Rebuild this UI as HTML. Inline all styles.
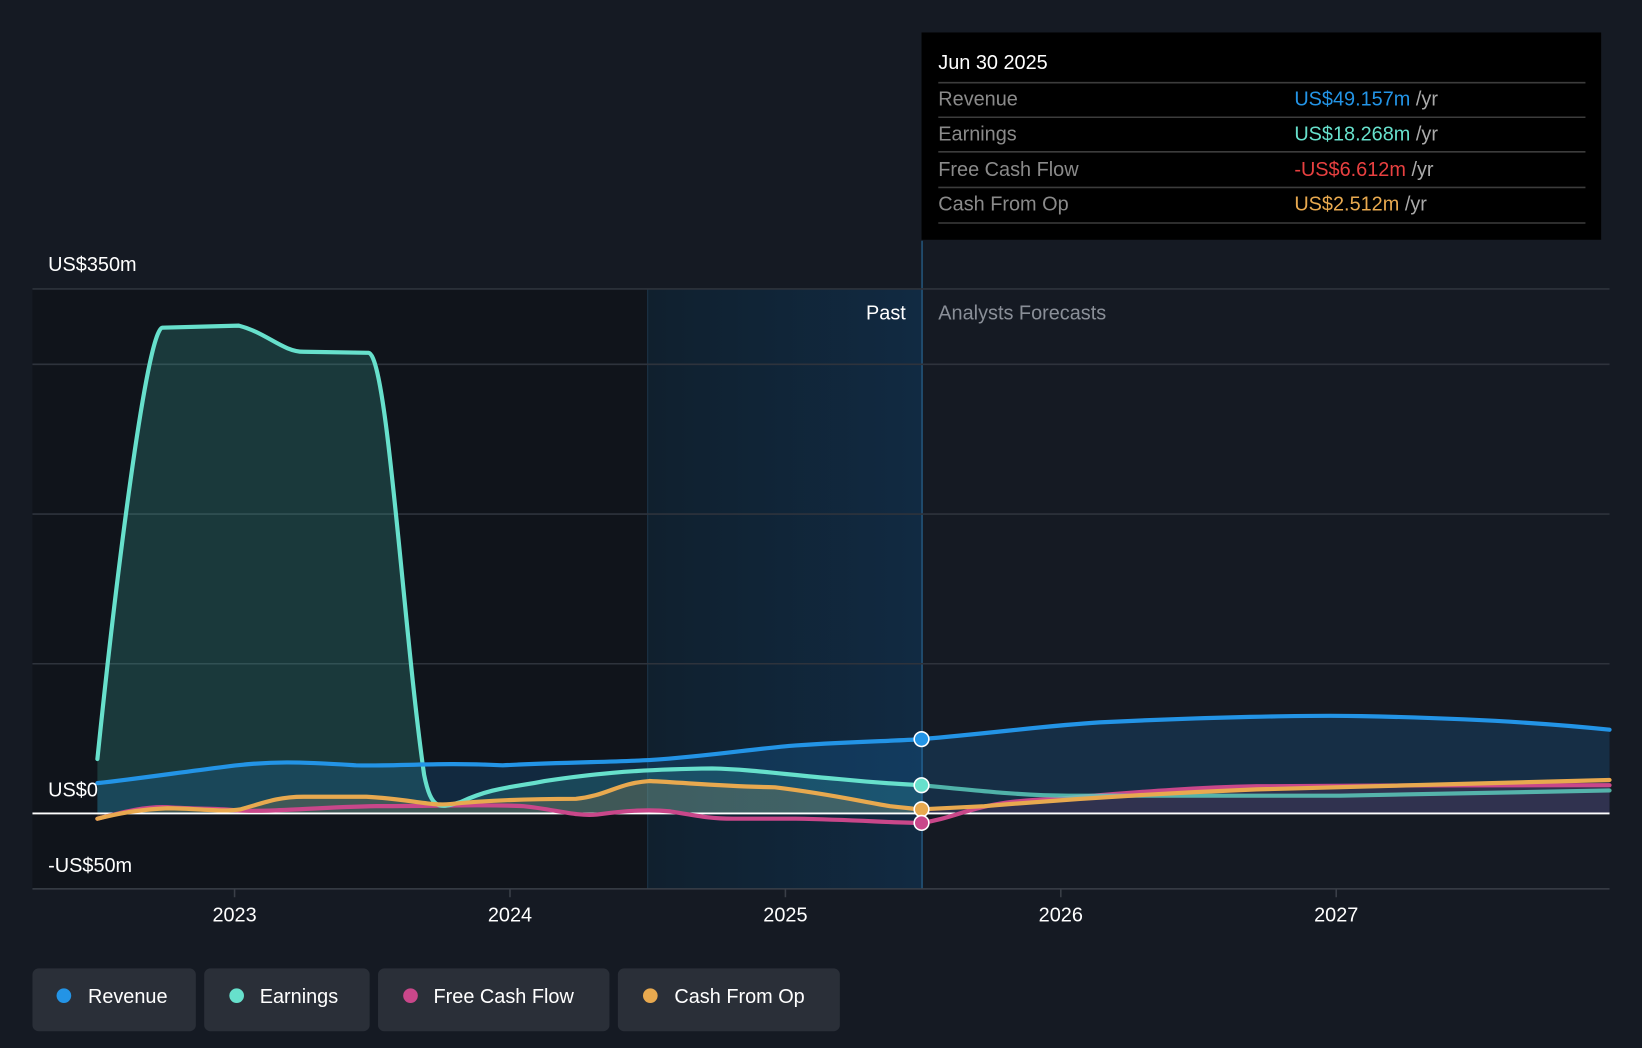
<!DOCTYPE html>
<html><head><meta charset="utf-8"><style>
html,body{margin:0;padding:0;background:#151a23;overflow:hidden}
svg{display:block}
text{font-family:"Liberation Sans",sans-serif}
</style></head><body>
<svg width="1642" height="1048" viewBox="0 0 1568 1001" preserveAspectRatio="none" xmlns="http://www.w3.org/2000/svg">
<defs>
<linearGradient id="hl" x1="0" x2="1" y1="0" y2="0">
<stop offset="0" stop-color="#10202e"/><stop offset="1" stop-color="#112a42"/>
</linearGradient>
</defs>
<rect width="1568" height="1001" fill="#151a23"/>
<rect x="31" y="276" width="587" height="573" fill="#10141b"/>
<rect x="618" y="276" width="262" height="573" fill="url(#hl)"/>
<line x1="618.5" y1="276" x2="618.5" y2="849" stroke="#1d3346" stroke-width="1"/>
<line x1="880.5" y1="230" x2="880.5" y2="849" stroke="#23557a" stroke-width="1.5"/>
<g stroke="#2e333c" stroke-width="1.5">
<line x1="31" y1="276" x2="1537" y2="276"/>
<line x1="31" y1="348" x2="1537" y2="348"/>
<line x1="31" y1="491" x2="1537" y2="491"/>
<line x1="31" y1="634" x2="1537" y2="634"/>
<line x1="31" y1="849" x2="1537" y2="849" stroke="#3a3f48"/>
</g>
<g stroke="#3a3f48" stroke-width="1.5">
<line x1="224" y1="849" x2="224" y2="857"/><line x1="487" y1="849" x2="487" y2="857"/>
<line x1="750" y1="849" x2="750" y2="857"/><line x1="1013" y1="849" x2="1013" y2="857"/>
<line x1="1276" y1="849" x2="1276" y2="857"/>
</g>
<!-- fills -->
<path d="M93,725 C110,560 140,315 155,313 L228,311 C255,318 270,336 290,336 L352,337 C370,340 385,600 405,740 C412,775 420,772 440,766 C470,752 490,752 520,746 C560,740 600,735 680,734 C720,735 750,740 800,744 C840,748 860,749 880,750 L880,777 L93,777 Z" fill="#3fbfae" fill-opacity="0.22"/>
<path d="M93,748 C130,744 170,738 210,733 C260,726 290,728 340,731 C380,732 420,728 480,731 C540,728 580,728 620,726 C680,722 720,715 760,712 C820,708 850,708 880,706 C950,700 1000,693 1050,690 C1150,685 1250,683 1300,684 C1400,686 1480,691 1537,697 L1537,777 L93,777 Z" fill="#1e88e5" fill-opacity="0.18"/>
<path d="M93,782 C120,775 140,773 160,772 C190,772 210,776 230,773 C260,764 270,761 290,761 L350,761 C390,763 410,770 430,768 C470,764 510,763 550,763 C580,760 590,748 620,746 C660,748 690,751 740,752 C790,758 820,765 850,770 C870,772 875,773 880,773 L880,777 L93,777 Z" fill="#e8a94f" fill-opacity="0.18"/>
<path d="M880,773 L940,770 C1000,765 1100,758 1200,754 C1350,751 1450,748 1537,745 L1537,777 L880,777Z" fill="#c9478a" fill-opacity="0.15"/>
<line x1="31" y1="777" x2="1537" y2="777" stroke="#ffffff" stroke-width="1.8"/>
<!-- lines -->
<g fill="none" stroke-width="4" stroke-linecap="round">
<path d="M93,782 C120,775 140,770 160,771 C190,773 210,772 225,774 C260,776 300,771 360,770 C420,770 460,768 500,770 C530,773 550,780 570,778 C600,774 620,773 640,775 C670,780 680,782 700,782 L760,782 C820,783 850,786 880,786 C920,780 930,765 1010,763 C1100,755 1150,752 1200,751 C1300,750 1450,750 1537,750" stroke="#c9478a"/>
<path d="M880,750 C940,756 980,760 1020,760 L1280,760 L1537,755" stroke="#5fd3c2" stroke-opacity="0.8"/>
<path d="M93,725 C110,560 140,315 155,313 L228,311 C255,318 270,336 290,336 L352,337 C370,340 385,600 405,740 C412,775 420,772 440,766 C470,752 490,752 520,746 C560,740 600,735 680,734 C720,735 750,740 800,744 C840,748 860,749 880,750" stroke="#67e0cc"/>
<path d="M93,782 C120,775 140,773 160,772 C190,772 210,776 230,773 C260,764 270,761 290,761 L350,761 C390,763 410,770 430,768 C470,764 510,763 550,763 C580,760 590,748 620,746 C660,748 690,751 740,752 C790,758 820,765 850,770 C870,772 875,773 880,773 L940,770 C1000,765 1100,758 1200,754 C1350,751 1450,748 1537,745" stroke="#e8a94f"/>
<path d="M93,748 C130,744 170,738 210,733 C260,726 290,728 340,731 C380,732 420,728 480,731 C540,728 580,728 620,726 C680,722 720,715 760,712 C820,708 850,708 880,706 C950,700 1000,693 1050,690 C1150,685 1250,683 1300,684 C1400,686 1480,691 1537,697" stroke="#2394e6"/>
</g>
<g stroke="#fff" stroke-width="1.5">
<circle cx="880" cy="706" r="7" fill="#2394e6"/>
<circle cx="880" cy="750" r="7" fill="#67e0cc"/>
<circle cx="880" cy="773" r="7" fill="#e8a94f"/>
<circle cx="880" cy="786" r="7" fill="#c9478a"/>
</g>
<!-- labels -->
<g fill="#ffffff" font-size="19">
<text x="46" y="259">US$350m</text>
<text x="46" y="761">US$0</text>
<text x="46" y="833">-US$50m</text>
<text x="224" y="880" text-anchor="middle">2023</text>
<text x="487" y="880" text-anchor="middle">2024</text>
<text x="750" y="880" text-anchor="middle">2025</text>
<text x="1013" y="880" text-anchor="middle">2026</text>
<text x="1276" y="880" text-anchor="middle">2027</text>
<text x="865" y="305" text-anchor="end">Past</text>
<text x="896" y="305" fill="#8a8f98">Analysts Forecasts</text>
</g>
<!-- tooltip -->
<rect x="880" y="31" width="649" height="198" fill="#000"/>
<g stroke="#3c3c3c" stroke-width="1.5">
<line x1="896" y1="79" x2="1514" y2="79"/><line x1="896" y1="112" x2="1514" y2="112"/>
<line x1="896" y1="145" x2="1514" y2="145"/><line x1="896" y1="179" x2="1514" y2="179"/>
<line x1="896" y1="213" x2="1514" y2="213"/>
</g>
<g font-size="19">
<text x="896" y="66" fill="#fff">Jun 30 2025</text>
<text x="896" y="101" fill="#8a8a8a">Revenue</text>
<text x="896" y="134" fill="#8a8a8a">Earnings</text>
<text x="896" y="168" fill="#8a8a8a">Free Cash Flow</text>
<text x="896" y="201" fill="#8a8a8a">Cash From Op</text>
<text x="1236" y="101" fill="#2394e6">US$49.157m <tspan fill="#aaa">/yr</tspan></text>
<text x="1236" y="134" fill="#67e0cc">US$18.268m <tspan fill="#aaa">/yr</tspan></text>
<text x="1236" y="168" fill="#e84040">-US$6.612m <tspan fill="#aaa">/yr</tspan></text>
<text x="1236" y="201" fill="#e8a94f">US$2.512m <tspan fill="#aaa">/yr</tspan></text>
</g>
<!-- legend -->
<g font-size="19" fill="#fff">
<rect x="31" y="925" width="156" height="60" rx="6" fill="#2a2f38"/>
<circle cx="61" cy="951" r="7" fill="#2394e6"/><text x="84" y="958">Revenue</text>
<rect x="195" y="925" width="158" height="60" rx="6" fill="#2a2f38"/>
<circle cx="226" cy="951" r="7" fill="#67e0cc"/><text x="248" y="958">Earnings</text>
<rect x="361" y="925" width="221" height="60" rx="6" fill="#2a2f38"/>
<circle cx="392" cy="951" r="7" fill="#c9478a"/><text x="414" y="958">Free Cash Flow</text>
<rect x="590" y="925" width="212" height="60" rx="6" fill="#2a2f38"/>
<circle cx="621" cy="951" r="7" fill="#e8a94f"/><text x="644" y="958">Cash From Op</text>
</g>
</svg>
</body></html>
